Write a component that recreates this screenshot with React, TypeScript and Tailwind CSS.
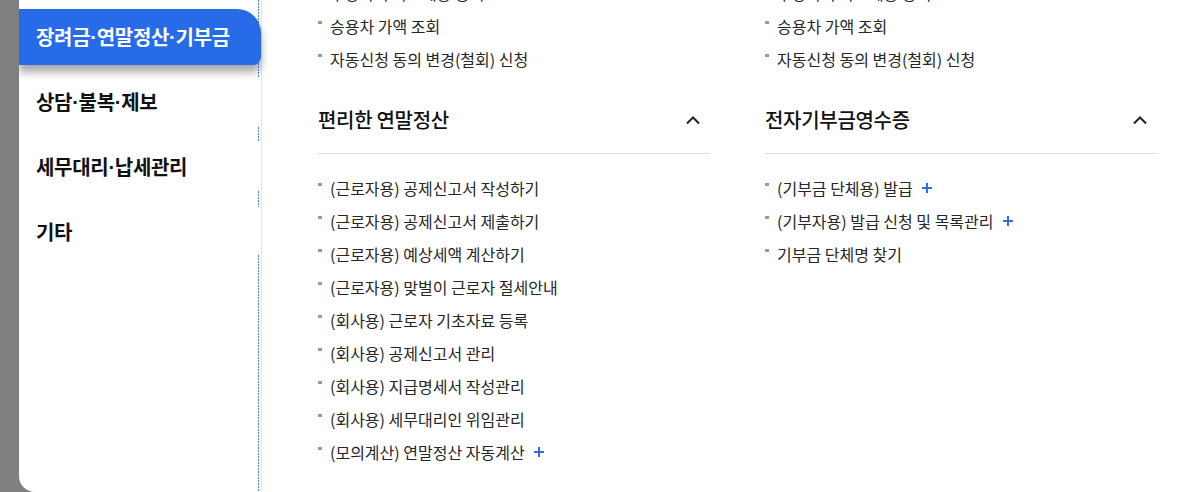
import React from "react";

type Item = { label: string; plus?: "blue" | "red" };

const PlusIcon = ({ color }: { color: string }) => (
  <svg width="12" height="12" viewBox="0 0 12 12" className="shrink-0">
    <path d="M6 1v10M1 6h10" stroke={color} strokeWidth="2" />
  </svg>
);

const ChevronUp = () => (
  <svg width="16" height="10" viewBox="0 0 16 10" className="shrink-0">
    <polyline points="2,8.5 8,2.5 14,8.5" fill="none" stroke="#222" strokeWidth="2" />
  </svg>
);

// narrow middle dot, as in the original web font
const MenuLabel = ({ text }: { text: string }) => (
  <>
    {text.split("·").map((part, i) => (
      <React.Fragment key={i}>
        {i > 0 && <span className="font-['Liberation_Sans',sans-serif]">·</span>}
        {part}
      </React.Fragment>
    ))}
  </>
);

const ListRow = ({ item }: { item: Item }) => (
  <li className="h-[33px] flex items-center text-[16px] text-[#262626]">
    <span className="w-[4px] h-[3px] bg-[#9a9a9a] mb-[6px] shrink-0" />
    <span className="ml-[8px] whitespace-nowrap">{item.label}</span>
    {item.plus && (
      <span className="ml-[8px] flex items-center">
        <PlusIcon color={item.plus === "blue" ? "#2e6be6" : "#e8452c"} />
      </span>
    )}
  </li>
);

const Section = ({ title, items }: { title: string; items: Item[] }) => (
  <div>
    <div className="mt-[28px] h-[34px] pb-[16px] box-content border-b border-[#dddddd] flex items-center justify-between pr-[9px]">
      <h3 className="text-[20px] font-medium text-[#111] tracking-[-0.3px]">{title}</h3>
      <ChevronUp />
    </div>
    <ul className="pt-[17px]">
      {items.map((it) => (
        <ListRow key={it.label} item={it} />
      ))}
    </ul>
  </div>
);

const Column = ({ top, title, items }: { top: Item[]; title: string; items: Item[] }) => (
  <div className="w-[392px] -mt-[24px]">
    <ul>
      {top.map((it) => (
        <ListRow key={it.label} item={it} />
      ))}
    </ul>
    <Section title={title} items={items} />
  </div>
);

const topItems: Item[] = [
  { label: "부양가족 자료제공 동의", plus: "red" },
  { label: "승용차 가액 조회" },
  { label: "자동신청 동의 변경(철회) 신청" },
];

const yearEnd: Item[] = [
  { label: "(근로자용) 공제신고서 작성하기" },
  { label: "(근로자용) 공제신고서 제출하기" },
  { label: "(근로자용) 예상세액 계산하기" },
  { label: "(근로자용) 맞벌이 근로자 절세안내" },
  { label: "(회사용) 근로자 기초자료 등록" },
  { label: "(회사용) 공제신고서 관리" },
  { label: "(회사용) 지급명세서 작성관리" },
  { label: "(회사용) 세무대리인 위임관리" },
  { label: "(모의계산) 연말정산 자동계산", plus: "blue" },
];

const donation: Item[] = [
  { label: "(기부금 단체용) 발급", plus: "blue" },
  { label: "(기부자용) 발급 신청 및 목록관리", plus: "blue" },
  { label: "기부금 단체명 찾기" },
];

const menus = ["상담·불복·제보", "세무대리·납세관리", "기타"];

export default function App() {
  return (
    <div
      className="h-[492px] w-[1188px] bg-[#808080] pl-[19px] overflow-hidden"
      style={{ fontFamily: '"Noto Sans CJK KR", "Noto Sans", sans-serif' }}
    >
      <div className="h-full bg-white rounded-bl-[16px] flex overflow-hidden">
        {/* Sidebar */}
        <div className="flex shrink-0">
          <nav className="w-[239px] flex flex-col gap-[9px] pt-[9px]">
            <div className="relative z-10 w-[242px] h-[56px] shrink-0 bg-[#276be8] rounded-tr-[24px] rounded-br-[8px] flex items-center pl-[17px] text-white text-[20px] font-bold tracking-[-0.3px] shadow-[0_7px_8px_rgba(0,0,0,0.35)]">
              <MenuLabel text="장려금·연말정산·기부금" />
            </div>
            {menus.map((m) => (
              <div
                key={m}
                className="h-[56px] shrink-0 flex items-center pl-[17px] text-[20px] font-bold text-[#111] tracking-[-0.3px]"
              >
                <MenuLabel text={m} />
              </div>
            ))}
          </nav>
          {/* focus outline fragments */}
          <div className="w-px flex flex-col">
            <div className="h-[77px] bg-[repeating-linear-gradient(to_bottom,#4a7ff0_0_2px,transparent_2px_3px)]" />
            <div className="h-[50px]" />
            <div className="h-[14px] bg-[repeating-linear-gradient(to_bottom,#4a7ff0_0_2px,transparent_2px_3px)]" />
            <div className="h-[50px]" />
            <div className="h-[16px] bg-[repeating-linear-gradient(to_bottom,#4a7ff0_0_2px,transparent_2px_3px)]" />
            <div className="h-[48px]" />
            <div className="flex-1 bg-[repeating-linear-gradient(to_bottom,#4a7ff0_0_2px,transparent_2px_3px)]" />
          </div>
          <div className="w-[2px]" />
          <div className="w-px bg-[#dfe3fb]" />
        </div>

        {/* Content */}
        <div className="flex-1 flex gap-[55px] pl-[56px]">
          <Column top={topItems} title="편리한 연말정산" items={yearEnd} />
          <Column top={topItems} title="전자기부금영수증" items={donation} />
        </div>
      </div>
    </div>
  );
}
